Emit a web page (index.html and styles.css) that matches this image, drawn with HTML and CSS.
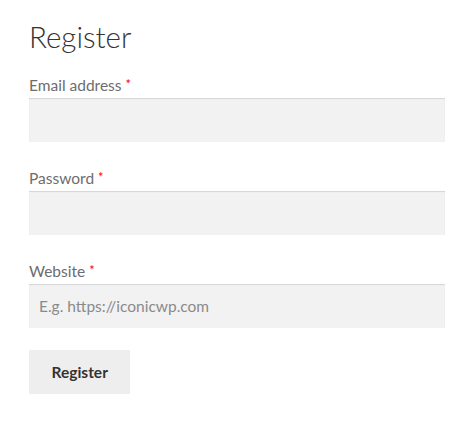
FILE: index.html
```html
<!DOCTYPE html>
<html lang="en">
<head>
<meta charset="utf-8">
<title>Register</title>
<link rel="stylesheet" href="styles.css">
</head>
<body>
<main class="page">
  <h2 class="title">Register</h2>
  <form class="form">
    <div class="fields">
      <div class="field">
        <label class="label" for="email">Email address <span class="req">*</span></label>
        <input class="input" id="email" type="email">
      </div>
      <div class="field">
        <label class="label" for="password">Password <span class="req">*</span></label>
        <input class="input" id="password" type="password">
      </div>
      <div class="field">
        <label class="label" for="website">Website <span class="req">*</span></label>
        <input class="input" id="website" type="text" placeholder="E.g. https://iconicwp.com">
      </div>
    </div>
    <div class="actions">
      <button class="btn" type="button">Register</button>
    </div>
  </form>
</main>
</body>
</html>
```

FILE: styles.css
```css
html, body {
  margin: 0;
  padding: 0;
  background: #ffffff;
}

body {
  font-family: "Lato", "Liberation Sans", sans-serif;
  color: #6d6d6d;
}

.page {
  padding: 17px 29px 0 29px;
}

.title {
  margin: 0 0 18px 0;
  font-size: 29.5px;
  line-height: 40px;
  font-weight: 300;
  color: #333333;
}

.form {
  display: flex;
  flex-direction: column;
  gap: 22px;
}

.fields {
  display: flex;
  flex-direction: column;
  gap: 26px;
}

.field {
  display: flex;
  flex-direction: column;
  gap: 2px;
}

.label {
  font-size: 15.5px;
  line-height: 21px;
  color: #6d6d6d;
}

.req {
  color: #ff0000;
  font-size: 13px;
  line-height: 0;
  vertical-align: 2px;
}

.input {
  box-sizing: border-box;
  width: 100%;
  height: 44px;
  margin: 0;
  border: 0;
  padding: 0 10px;
  background: #f2f2f2;
  box-shadow: inset 0 1px 1px rgba(0, 0, 0, 0.125);
  font-family: inherit;
  font-size: 15.5px;
  color: #43454b;
  outline: none;
}

.input::placeholder {
  color: #8a8a8a;
}

.btn {
  box-sizing: border-box;
  height: 44px;
  padding: 0 22.5px;
  border: 0;
  background: #eeeeee;
  color: #333333;
  font-family: inherit;
  font-size: 15.5px;
  font-weight: 700;
  cursor: pointer;
}
```
